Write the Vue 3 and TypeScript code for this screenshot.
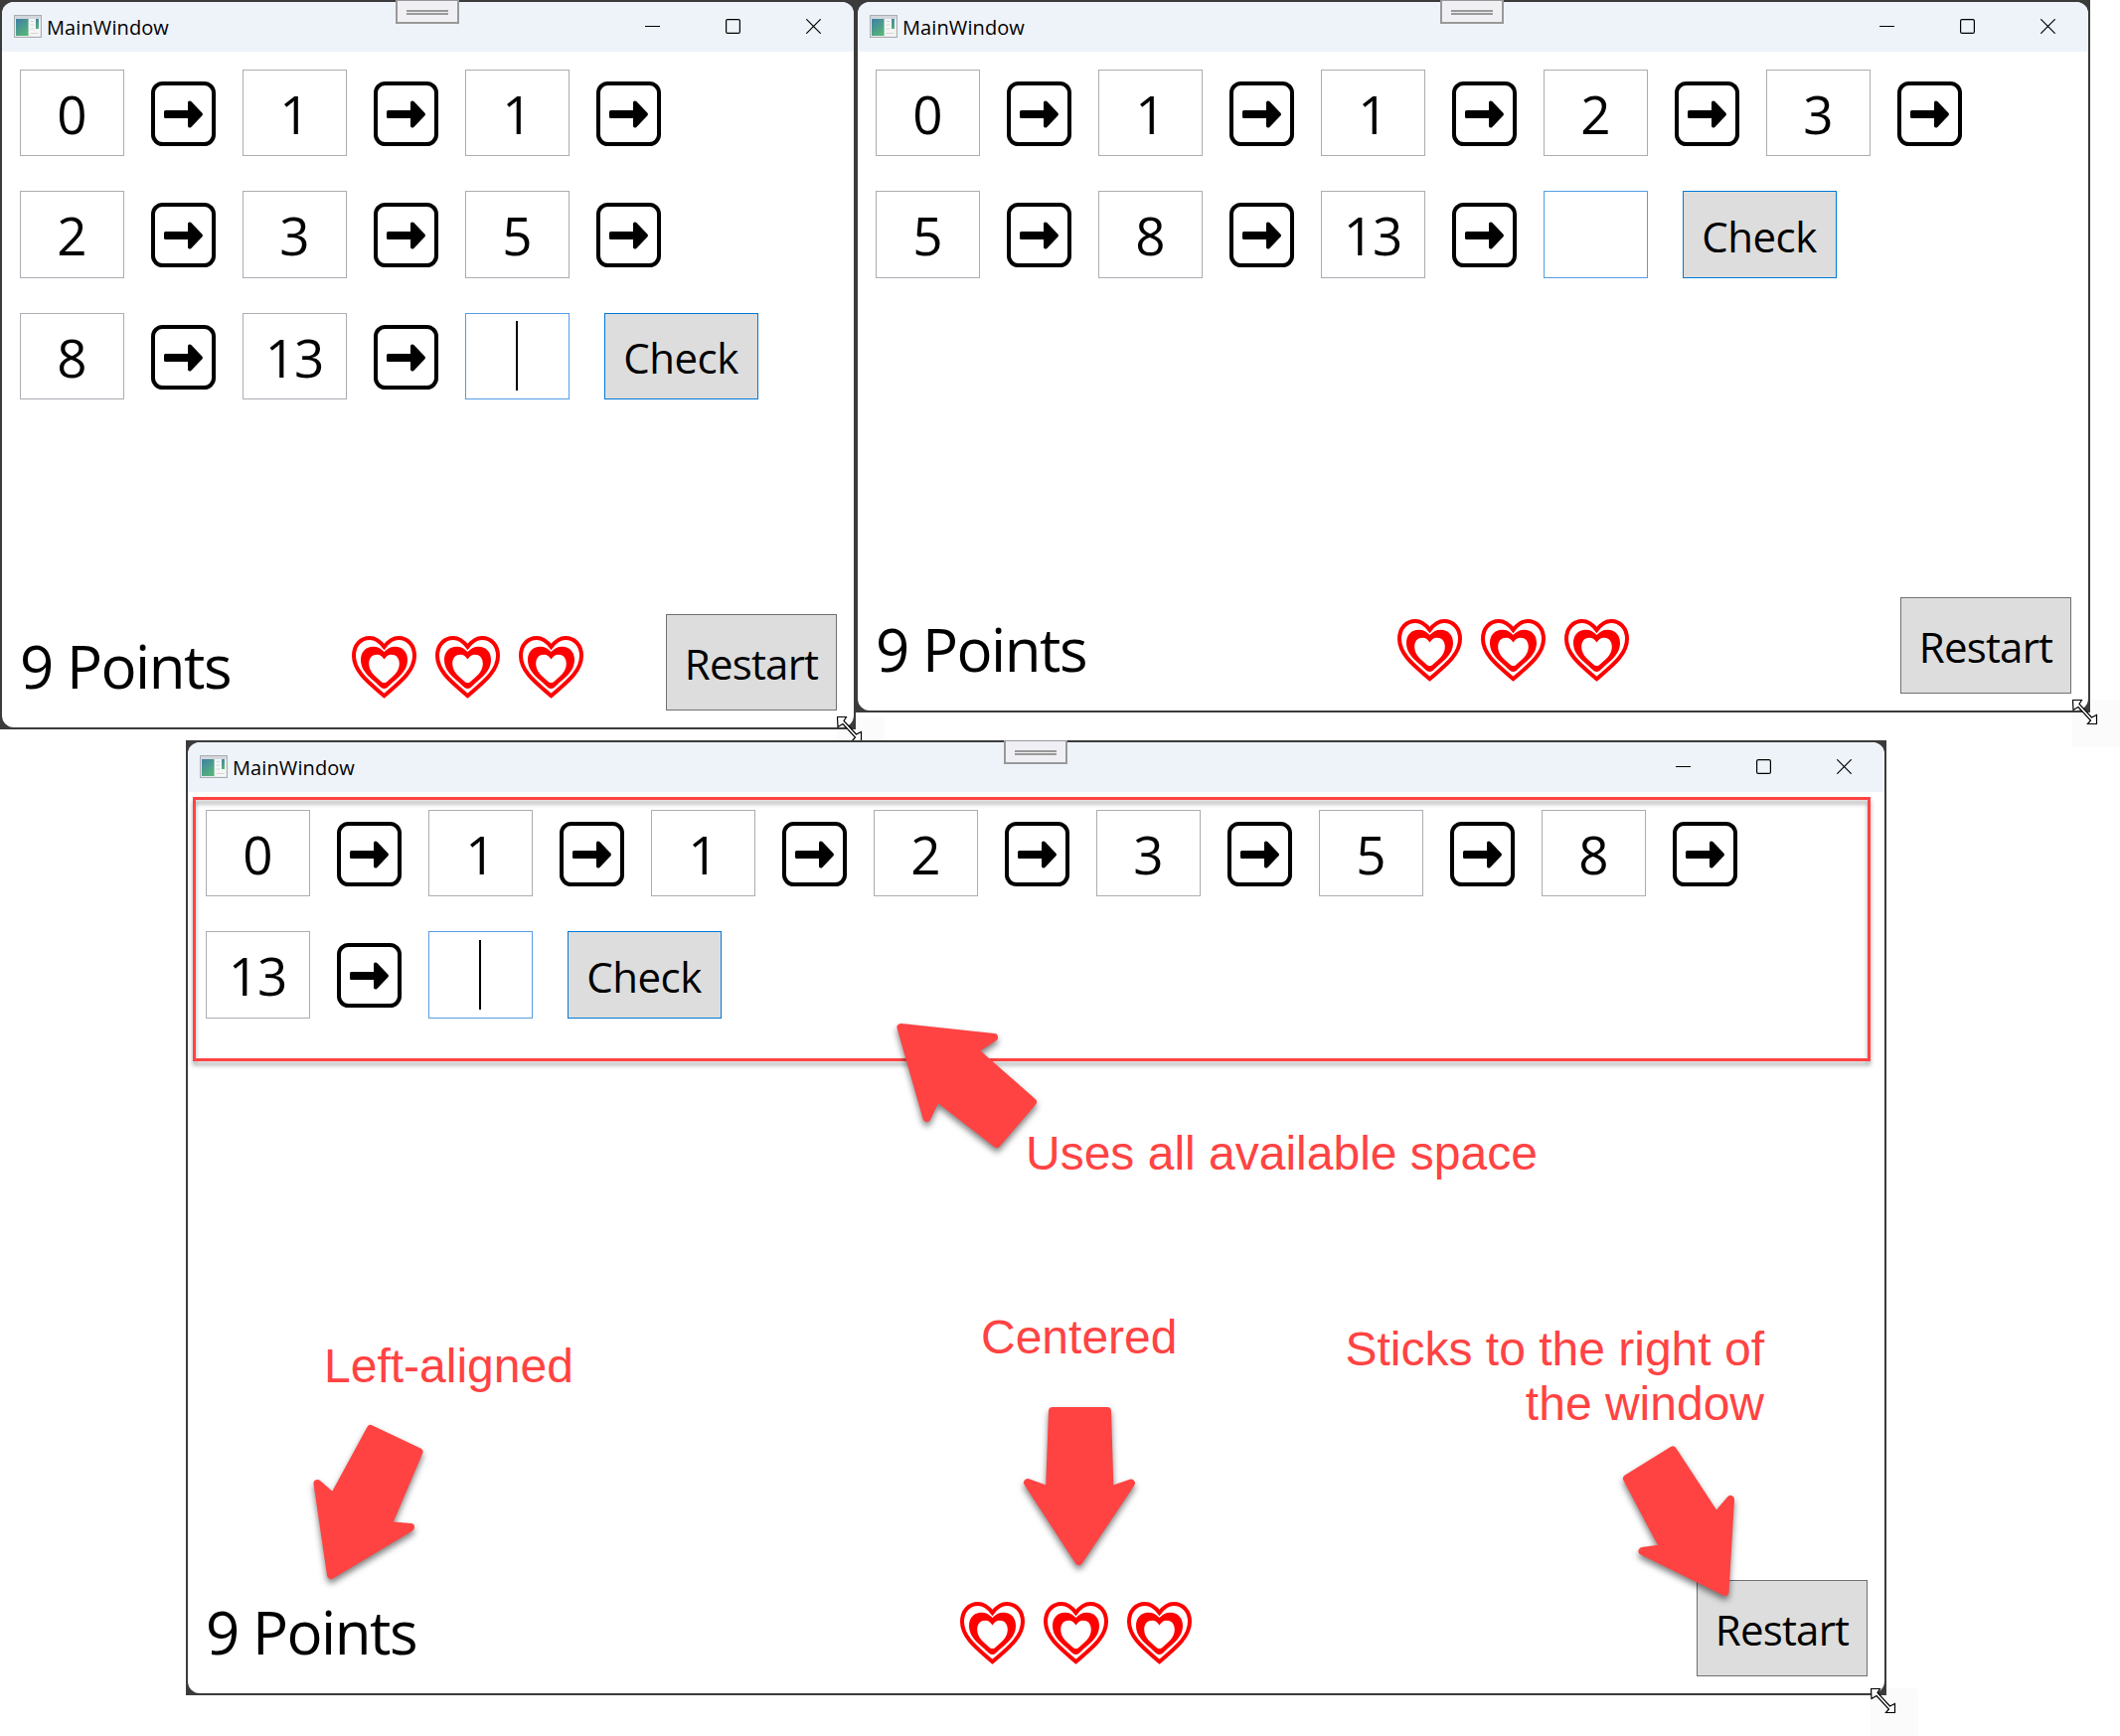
<script setup lang="ts">
interface GameWindow {
  id: string
  left: number
  top: number
  width: number
  height: number
  caret: boolean
  framed: boolean
  pointerX: number
  pointerY: number
}

const windows: GameWindow[] = [
  { id: 'narrow', left: 0, top: 0, width: 861, height: 734, caret: true, framed: false, pointerX: 19, pointerY: 13 },
  { id: 'medium', left: 861, top: 0, width: 1242, height: 717, caret: false, framed: false, pointerX: 18, pointerY: 13 },
  { id: 'wide', left: 187, top: 745, width: 1711, height: 961, caret: true, framed: true, pointerX: 16, pointerY: 7 },
]

const sequence: number[] = [0, 1, 1, 2, 3, 5, 8, 13]

const arrows: string[] = [
  '906.5,1034 1000,1044 980,1057 1039,1109 1003,1151 942.5,1104 932.5,1125',
  '373,1438 421.5,1461 390,1535 413,1537 333,1585 319.5,1493 335.5,1507',
  '1059,1420 1114,1420 1116.5,1500 1138,1492.5 1085.5,1571 1034,1492 1056,1500',
  '1683,1459.5 1726.5,1526 1741,1509 1735.5,1602 1652.5,1561 1674,1558 1637,1488',
]

const px = (n: number): string => `${n}px`
</script>

<template>
  <main class="board">
    <section
      v-for="w in windows"
      :key="w.id"
      class="backdrop"
      :style="{ left: px(w.left), top: px(w.top), width: px(w.width), height: px(w.height) }"
    >
      <div class="window">
        <header class="titlebar">
          <svg class="app-icon" width="28" height="24" viewBox="0 0 28 24">
            <defs>
              <linearGradient :id="`g-${w.id}`" x1="0" y1="0" x2="0.6" y2="1">
                <stop offset="0" stop-color="#3f7fa6" />
                <stop offset="1" stop-color="#55b27a" />
              </linearGradient>
            </defs>
            <rect x="0.5" y="0.5" width="27" height="22" fill="#e9ebed" stroke="#a9adb2" />
            <rect x="1" y="1" width="26" height="3" fill="#d3d7dc" />
            <rect x="2" y="4" width="12.5" height="17" :fill="`url(#g-${w.id})`" />
            <rect x="15" y="4" width="11" height="17" fill="#f6f6f6" />
            <path d="M16.500 6.500h4M16.500 10h4M16.500 14h4M16.500 18.500h8" stroke="#d6d6d8" />
            <rect x="22" y="4" width="3" height="10" :fill="`url(#g-${w.id})`" />
          </svg>
          <span class="caption">MainWindow</span>
          <div class="controls">
            <svg width="15" height="15" viewBox="0 0 15 15"><path d="M0 7.500h15" stroke="#000" /></svg>
            <svg width="15" height="15" viewBox="0 0 15 15">
              <rect x="0.600" y="0.600" width="13.800" height="13.800" rx="1.500" fill="none" stroke="#000" stroke-width="1.200" />
            </svg>
            <svg width="15" height="15" viewBox="0 0 15 15">
              <path d="M0.300 0.300l14.400 14.400M14.700 0.300l-14.400 14.400" stroke="#000" stroke-width="1.200" />
            </svg>
          </div>
        </header>

        <div class="sequence">
          <div v-for="(n, i) in sequence" :key="i" class="step">
            <div class="box">{{ n }}</div>
            <svg class="next" width="65" height="65" viewBox="0 0 65 65">
              <rect x="2" y="2" width="61" height="61" rx="9.500" fill="#fff" stroke="#000" stroke-width="4" />
              <path
                d="M14.500 29h22.500v-8.200q1.400-2.300 3.300-.8L51.500 31.700q1 1.300 0 2.600L40.300 46q-1.900 1.500-3.300-.8V37h-22.500q-1.500 0-1.500-1.500v-5q0-1.500 1.500-1.500z"
              />
            </svg>
          </div>
          <div class="answer">
            <div class="box focused"><i v-if="w.caret" class="caret"></i></div>
            <button class="check">Check</button>
          </div>
        </div>

        <footer class="status">
          <div class="points">9 Points</div>
          <div class="lives">
            <svg v-for="h in 3" :key="h" width="65" height="63" viewBox="0 0 65 63">
              <path
                d="M32.500 11C28 5 23 2 18 2C9 2 2 9 2 20C2 36 18 47.500 32.500 60.200C47 47.500 63 36 63 20C63 9 56 2 47 2C42 2 37 5 32.500 11Z"
                fill="#fff"
                stroke="#f00"
                stroke-width="4"
              />
              <path
                d="M32.500 16C29 12.500 26 10.700 21.500 10.700C14 10.700 9 16 9 24C9 37 21 43.500 29.500 52Q32.500 54 35.500 52C44 43.500 56 37 56 24C56 16 51 10.700 43.500 10.700C39 10.700 36 12.500 32.500 16Z"
                fill="#f00"
              />
              <path
                d="M32.500 23.500C30 20 28 18.800 25.500 18.800C20.500 18.800 17.200 22 17.200 28C17.200 36 24 41 30 46.200Q32.500 48 35 46.200C41 41 47.800 36 47.800 28C47.800 22 44.500 18.800 39.500 18.800C37 18.800 35 20 32.500 23.500Z"
                fill="#fff"
              />
            </svg>
          </div>
          <button class="restart">Restart</button>
        </footer>
      </div>

      <div class="grip"></div>
      <div v-if="w.framed" class="frame"></div>
      <div class="pointer" :style="{ '--dx': px(w.pointerX), '--dy': px(w.pointerY) }">
        <svg width="26" height="26" viewBox="0 0 26 26">
          <path
            d="M0.500 0.500H9.500L7 4.500L19.500 18L24.500 15.500V24.500H15.500L18.500 21L6 7.500L1 10.500Z"
            fill="#fff"
            stroke="#000"
            stroke-width="1.200"
          />
        </svg>
      </div>
    </section>

    <svg class="arrows" width="2133" height="1747" viewBox="0 0 2133 1747">
      <polygon v-for="(a, i) in arrows" :key="i" :points="a" />
    </svg>

    <p class="note note-space">Uses all available space</p>
    <p class="note note-left">Left-aligned</p>
    <p class="note note-center">Centered</p>
    <p class="note note-right">Sticks to the right of<br />the window</p>
  </main>
</template>

<style>
body {
  margin: 0;
  background: #fff;
}
</style>

<style scoped>
.board {
  position: relative;
  width: 2133px;
  height: 1747px;
  overflow: hidden;
  background: #fff;
  color: #000;
  font-family: 'Open Sans', 'Noto Sans', sans-serif;
}

.backdrop {
  position: absolute;
  box-sizing: border-box;
  padding: 2px;
  background: #3b3b3c;
}

.window {
  display: flex;
  flex-direction: column;
  height: 100%;
  border-radius: 12px;
  overflow: hidden;
  background: #fff;
}

.titlebar {
  display: flex;
  align-items: center;
  flex: none;
  height: 50px;
  padding-left: 12px;
  background: #eef3fa;
}

.app-icon {
  flex: none;
}

.caption {
  margin-left: 5px;
  padding-top: 1px;
  font-size: 20px;
  line-height: 50px;
  letter-spacing: 0.1px;
}

.controls {
  display: flex;
  margin-left: auto;
}

.controls svg {
  padding: 0 33px 1px;
}

.sequence {
  display: flex;
  flex-wrap: wrap;
  align-content: flex-start;
  row-gap: 35px;
  flex: 1;
  padding: 18px 0 0 18px;
}

.step {
  display: flex;
  width: 224px;
  height: 87.3px;
}

.box {
  box-sizing: border-box;
  display: flex;
  align-items: center;
  justify-content: center;
  width: 105px;
  height: 87.3px;
  padding: 3px 1px 0 0;
  border: 1px solid #abadb3;
  background: #fff;
  font-size: 53px;
  line-height: 72px;
  letter-spacing: -1px;
}

.next {
  margin: 12px 27px 0 26.5px;
}

.answer {
  display: flex;
  gap: 35px;
}

.focused {
  padding: 0;
  border-color: #569de5;
}

.caret {
  width: 2px;
  height: 70px;
  margin-right: 1px;
  background: #000;
}

button {
  box-sizing: border-box;
  margin: 0;
  border: 1px solid #707070;
  border-radius: 0;
  background: #ddd;
  color: #000;
  font-family: inherit;
  font-size: 42px;
  line-height: 57px;
}

.check {
  width: 155px;
  height: 87.3px;
  padding: 3px 1px 0 0;
  border-color: #0078d7;
  letter-spacing: -0.5px;
}

.status {
  display: flex;
  flex: none;
  height: 97px;
  padding: 0 17px 17px 18px;
}

.points {
  width: 251px;
  padding-top: 11px;
  font-size: 60px;
  line-height: 82px;
  letter-spacing: -1.5px;
  white-space: nowrap;
}

.lives {
  display: flex;
  justify-content: center;
  gap: 19px;
  flex: 1;
  padding-top: 22px;
}

.restart {
  width: 172px;
  height: 97px;
  padding: 2px 0 0;
  letter-spacing: -0.8px;
}

.grip {
  position: absolute;
  top: 0;
  left: 50%;
  box-sizing: border-box;
  width: 64px;
  height: 24px;
  margin-left: -33px;
  border: 2px solid #999;
  border-top-width: 1px;
  background: linear-gradient(#999, #999) 9px 9px / 42px 2px no-repeat,
    linear-gradient(#999, #999) 9px 12px / 42px 2px no-repeat, #f0eff4;
}

.frame {
  position: absolute;
  top: 57px;
  left: 7px;
  box-sizing: border-box;
  width: 1688px;
  height: 266px;
  border: 3px solid #ff4343;
  filter: drop-shadow(0 4px 2px rgba(0, 0, 0, 0.35));
}

.pointer {
  position: absolute;
  left: calc(100% - var(--dx));
  top: calc(100% - var(--dy));
  width: 48px;
  height: 48px;
}

/* Pale tile that shows only where the pointer leaves its window. */
.pointer::before {
  content: '';
  position: absolute;
  inset: 0;
  background: #fbfbfb;
  clip-path: polygon(var(--dx) 0, 100% 0, 100% 100%, 0 100%, 0 var(--dy), var(--dx) var(--dy));
}

.pointer svg {
  position: relative;
  display: block;
}

.arrows {
  position: absolute;
  inset: 0;
  fill: #ff4343;
  stroke: #ff4343;
  stroke-width: 8px;
  stroke-linejoin: round;
  filter: drop-shadow(0 4px 3px rgba(0, 0, 0, 0.5));
}

.note {
  position: absolute;
  margin: 0;
  color: #ff4343;
  font-family: 'Liberation Sans', Arial, sans-serif;
  font-size: 48px;
  line-height: 55px;
  white-space: nowrap;
}

.note-space {
  left: 1032px;
  top: 1133px;
}

.note-left {
  left: 326px;
  top: 1347px;
}

.note-center {
  left: 987px;
  top: 1318px;
}

.note-right {
  right: 358px;
  top: 1330px;
  text-align: right;
}
</style>
